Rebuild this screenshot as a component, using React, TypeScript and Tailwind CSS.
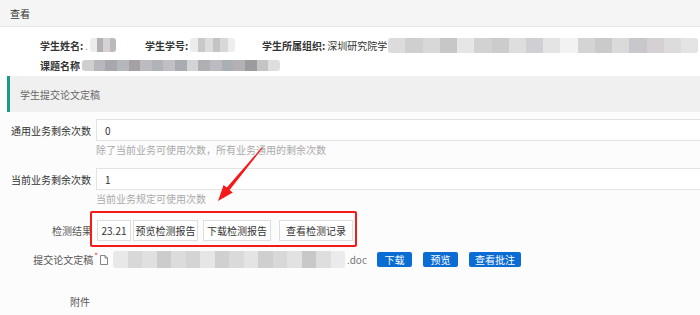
import React from "react";

function Mosaic({ w, h, cells, className = "" }: { w: string; h: string; cells: string[]; className?: string }) {
  return (
    <div className={`flex overflow-hidden rounded-[3px] blur-[0.6px] ${w} ${h} ${className}`}>
      {cells.map((c, i) => (
        <div key={i} className={`flex-1 h-full ${c}`} />
      ))}
    </div>
  );
}

const nameCells = ["bg-[#ececec]", "bg-[#b3b0b5]", "bg-[#d6d2d4]", "bg-[#bdb8bd]"];
const idCells = ["bg-[#ececec]", "bg-[#c8c8c8]", "bg-[#dcdcdc]", "bg-[#c4c4c4]", "bg-[#d8d8d8]", "bg-[#eeeeee]"];
const orgCells = [
  "bg-[#dcdcdc]", "bg-[#cfcfcf]", "bg-[#d8d8d8]", "bg-[#c8c6c8]", "bg-[#e6e6e6]", "bg-[#d2d2d2]",
  "bg-[#cccccc]", "bg-[#dedede]", "bg-[#d0d0d4]", "bg-[#e4e4e4]", "bg-[#f2f2f2]", "bg-[#d4d4d4]",
  "bg-[#cacaca]", "bg-[#dadada]", "bg-[#c8c8cc]", "bg-[#d4d0d4]", "bg-[#dcdcdc]", "bg-[#e4e4e4]",
];
const titleCells = [
  "bg-[#cfcfcf]", "bg-[#b8b8bc]", "bg-[#a8a8ac]", "bg-[#b4b8bc]", "bg-[#a4a0a4]", "bg-[#bcbcc0]",
  "bg-[#b0b4b8]", "bg-[#c0c0c4]", "bg-[#a8acb0]", "bg-[#d4d4d4]", "bg-[#b0b0b4]", "bg-[#bcbcc0]",
  "bg-[#a8b0b4]", "bg-[#b4b0b4]", "bg-[#9c9ca0]", "bg-[#c4c4c4]", "bg-[#dedede]",
];
const fileCells = [
  "bg-[#e8e8e8]", "bg-[#d8d8d8]", "bg-[#e0e0e0]", "bg-[#cccccc]", "bg-[#dcdcdc]", "bg-[#d4d4d4]",
  "bg-[#e6e6e6]", "bg-[#d0d0d0]", "bg-[#dadada]", "bg-[#e4e4e4]", "bg-[#cfcfcf]", "bg-[#d8d8d8]",
  "bg-[#e2e2e2]", "bg-[#c8c8c8]", "bg-[#dedede]", "bg-[#ebebeb]",
];

export default function App() {
  return (
    <div className="relative w-[700px] h-[315px] overflow-hidden bg-white text-[10px] text-[#333] font-['Noto_Sans_CJK_SC',sans-serif]">
      {/* header */}
      <div className="h-[27px] bg-[#f5f5f5] border-b border-[#e8e8e8] flex items-center pl-[10px] text-[#333]">
        查看
      </div>

      {/* info */}
      <div className="h-[49px] pt-[8px] pl-[40px] bg-white">
        <div className="h-[20px] flex items-center">
          <div className="w-[105px] flex items-center">
            <span className="font-bold">学生姓名:</span>
            <span className="ml-[2px] text-[#999]">.</span>
            <Mosaic w="w-[26px]" h="h-[14px]" cells={nameCells} className="ml-[2px]" />
          </div>
          <div className="w-[117px] flex items-center">
            <span className="font-bold">学生学号:</span>
            <Mosaic w="w-[45px]" h="h-[14px]" cells={idCells} className="ml-[2px]" />
          </div>
          <div className="flex items-center">
            <span className="font-bold">学生所属组织:</span>
            <span className="ml-[2px]">深圳研究院学</span>
            <Mosaic w="w-[310px]" h="h-[15px]" cells={orgCells} className="ml-[1px]" />
          </div>
        </div>
        <div className="h-[20px] flex items-center">
          <span className="font-bold">课题名称</span>
          <Mosaic w="w-[198px]" h="h-[11px]" cells={titleCells} className="ml-[2px]" />
        </div>
      </div>

      {/* section header */}
      <div className="ml-[7px] h-[36px] bg-[#f0f0f0] border-l-[3px] border-[#1a9c82] flex items-center pl-[10px] text-[#666]">
        学生提交论文定稿
      </div>

      {/* form */}
      <div className="bg-[#fcfcfc] pt-[7px] h-[203px]">
        <div className="flex items-center h-[22px]">
          <div className="w-[96px] pr-[5px] text-right whitespace-nowrap">通用业务剩余次数</div>
          <div className="flex-1 -mr-[12px] h-[22px] border border-[#e3e3e3] bg-white flex items-center pl-[8px]">0</div>
        </div>
        <div className="h-[18px] leading-[18px] pl-[96px] text-[#aaa]">除了当前业务可使用次数，所有业务通用的剩余次数</div>

        <div className="flex items-center h-[22px] mt-[9px]">
          <div className="w-[96px] pr-[5px] text-right whitespace-nowrap">当前业务剩余次数</div>
          <div className="flex-1 -mr-[12px] h-[22px] border border-[#e3e3e3] bg-white flex items-center pl-[8px]">1</div>
        </div>
        <div className="h-[18px] leading-[18px] pl-[96px] text-[#aaa]">当前业务规定可使用次数</div>

        <div className="flex items-center h-[21px] mt-[12px]">
          <div className="w-[97px] pr-[5px] text-right whitespace-nowrap text-[#555]">检测结果</div>
          <div className="w-[34px] h-[21px] border border-[#dedede] bg-white flex items-center justify-center">23.21</div>
          <div className="ml-[2px] w-[65px] h-[21px] border border-[#dedede] bg-white flex items-center justify-center">预览检测报告</div>
          <div className="ml-[5px] w-[68px] h-[21px] border border-[#dedede] bg-white flex items-center justify-center">下载检测报告</div>
          <div className="ml-[8px] w-[74px] h-[21px] border border-[#dedede] bg-white flex items-center justify-center">查看检测记录</div>
        </div>

        <div className="flex items-center h-[15px] mt-[11px]">
          <div className="w-[98px] flex justify-end items-center whitespace-nowrap text-[#555]">
            <span>提交论文定稿</span>
            <span className="text-[#e33] text-[8px] self-start -mt-[2px] ml-[1px]">*</span>
          </div>
          <svg width="8" height="10" viewBox="0 0 8 10" className="ml-[2px]">
            <path d="M0.5 0.5 H5 L7.5 3 V9.5 H0.5 Z M5 0.5 V3 H7.5" fill="none" stroke="#777" strokeWidth="0.9" />
          </svg>
          <Mosaic w="w-[232px]" h="h-[17px]" cells={fileCells} className="ml-[5px]" />
          <span className="ml-[2px] text-[#777]">.doc</span>
          <div className="ml-[10px] w-[35px] h-[15px] rounded-[2px] bg-[#0b6dd3] text-white flex items-center justify-center">下载</div>
          <div className="ml-[11px] w-[35px] h-[15px] rounded-[2px] bg-[#0b6dd3] text-white flex items-center justify-center">预览</div>
          <div className="ml-[11px] w-[52px] h-[15px] rounded-[2px] bg-[#0b6dd3] text-white flex items-center justify-center">查看批注</div>
        </div>

        <div className="flex items-center h-[20px] mt-[24px]">
          <div className="w-[90px] text-right text-[#555]">附件</div>
        </div>
      </div>

      {/* annotation: red box */}
      <div className="absolute left-[90px] top-[211px] w-[267px] h-[36px] border-2 border-[#f51a1a] rounded-[2px] pointer-events-none" />

      {/* annotation: arrow */}
      <svg className="absolute left-0 top-0 pointer-events-none" width="700" height="315" viewBox="0 0 700 315">
        <polygon
          points="262.4,148.3 261.6,147.7 226.8,187.5 223.6,184.9 218,201 232.8,192.5 229.6,189.9"
          fill="#f51a1a"
        />
      </svg>
    </div>
  );
}
